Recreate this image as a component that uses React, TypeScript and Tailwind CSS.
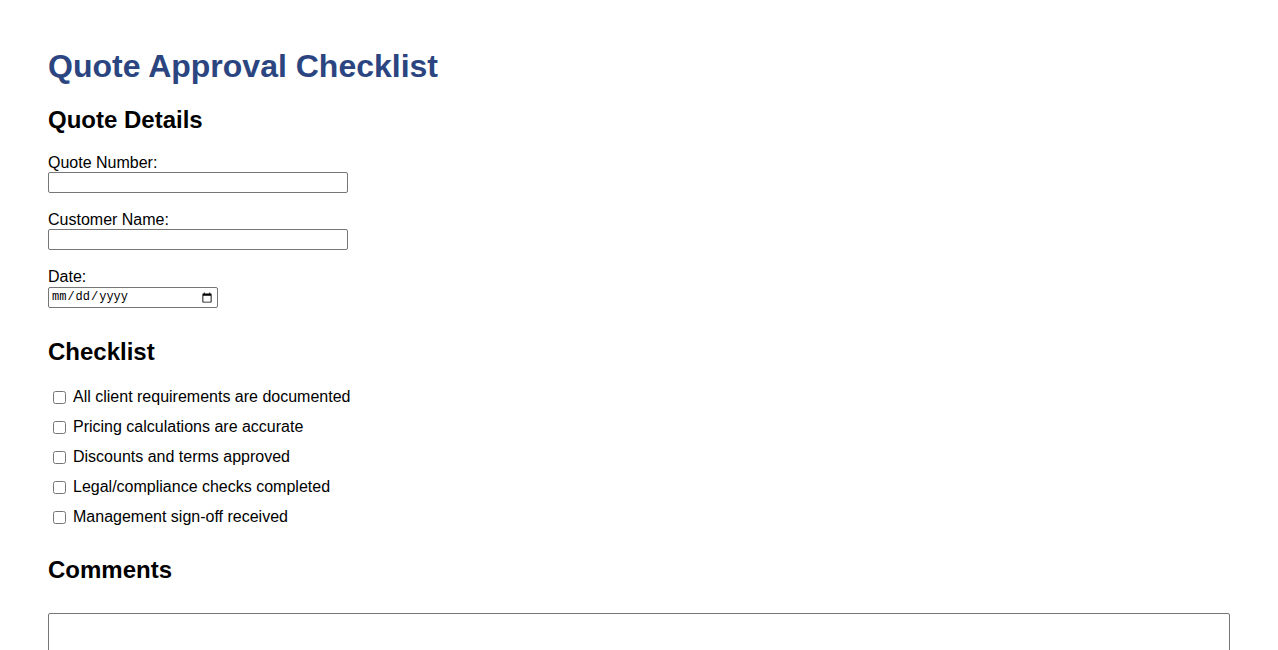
const ITEMS = [
  'All client requirements are documented',
  'Pricing calculations are accurate',
  'Discounts and terms approved',
  'Legal/compliance checks completed',
  'Management sign-off received',
]

function Field({ label }: { label: string }) {
  return (
    <div className="mb-[18px]">
      <label className="block h-[18px] leading-[18px]">{label}</label>
      <input
        type="text"
        className="block h-[21px] w-[300px] rounded-[2px] border border-[#767676] bg-white px-[2px] text-[13px] leading-[17px]"
      />
    </div>
  )
}

export default function App() {
  return (
    <div className="min-h-screen bg-white px-[48px] pt-[48px] font-['Liberation_Sans',Arial,sans-serif] text-[16px] text-black">
      <h1 className="mb-[21px] text-[32px] font-bold leading-[37px] text-[#2b4580]">Quote Approval Checklist</h1>

      <h2 className="mb-[20px] text-[24px] font-bold leading-[28px]">Quote Details</h2>
      <Field label="Quote Number:" />
      <Field label="Customer Name:" />
      <div>
        <label className="block h-[19px] leading-[18px]">Date:</label>
        <input
          type="date"
          className="block h-[21px] w-[170px] rounded-[2px] border border-[#767676] bg-white px-[2px] font-['Liberation_Mono',monospace] text-[12px] leading-[17px]"
        />
      </div>

      <h2 className="mt-[30px] mb-[22px] text-[24px] font-bold leading-[28px]">Checklist</h2>
      <div className="flex flex-col gap-[12px]">
        {ITEMS.map(item => (
          <label key={item} className="flex h-[18px] items-center">
            <input type="checkbox" className="ml-[5px] mr-[7px] h-[13px] w-[13px] appearance-auto" />
            <span className="leading-[18px]">{item}</span>
          </label>
        ))}
      </div>

      <h2 className="mt-[30px] mb-[29px] text-[24px] font-bold leading-[28px]">Comments</h2>
      <textarea className="block h-[100px] w-full rounded-[2px] border border-[#767676] bg-white" />
    </div>
  )
}
